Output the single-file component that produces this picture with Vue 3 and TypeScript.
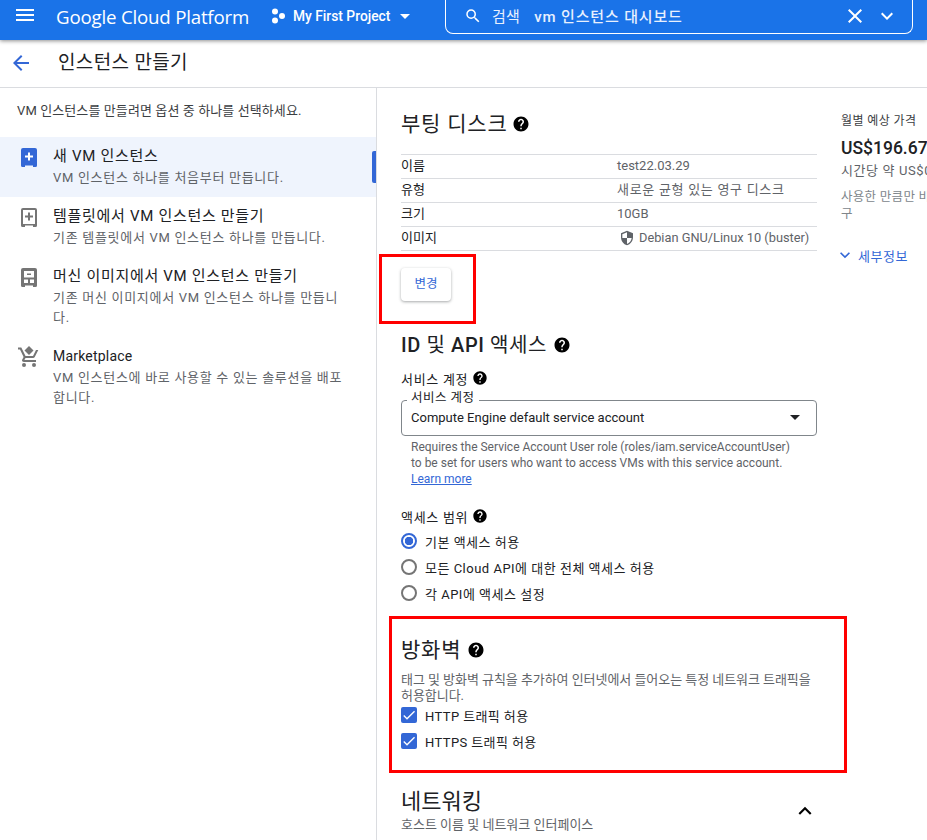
<script setup lang="ts">
interface Option { title: string; desc: string; icon: string; active?: boolean }
const options: Option[] = [
  { title: '새 VM 인스턴스', desc: 'VM 인스턴스 하나를 처음부터 만듭니다.', icon: 'new', active: true },
  { title: '템플릿에서 VM 인스턴스 만들기', desc: '기존 템플릿에서 VM 인스턴스 하나를 만듭니다.', icon: 'template' },
  { title: '머신 이미지에서 VM 인스턴스 만들기', desc: '기존 머신 이미지에서 VM 인스턴스 하나를 만듭니다.', icon: 'image' },
  { title: 'Marketplace', desc: 'VM 인스턴스에 바로 사용할 수 있는 솔루션을 배포합니다.', icon: 'cart' },
]
const disk = [
  { k: '이름', v: 'test22.03.29', ko: false },
  { k: '유형', v: '새로운 균형 있는 영구 디스크', ko: true },
  { k: '크기', v: '10GB', ko: false },
]
const scopes = [
  { label: '기본 액세스 허용', on: true },
  { label: '모든 Cloud API에 대한 전체 액세스 허용', on: false },
  { label: '각 API에 액세스 설정', on: false },
]
const foot = 'M2 0h12a2 2 0 0 1 2 2v15.500a1.500 1.500 0 0 1-1.500 1.500H12v-1.500H4V19H1.500A1.500 1.500 0 0 1 0 17.500V2a2 2 0 0 1 2-2z'
const plus = 'M7 4.500h2v3h3v2H9v3H7v-3H4v-2h3z'
const help = 'M12 2C6.48 2 2 6.48 2 12s4.48 10 10 10 10-4.48 10-10S17.52 2 12 2zm1 17h-2v-2h2v2zm2.07-7.75l-.9.92C13.45 12.9 13 13.5 13 15h-2v-.5c0-1.1.45-2.1 1.17-2.83l1.24-1.26c.37-.36.59-.86.59-1.41 0-1.1-.9-2-2-2s-2 .9-2 2H8c0-2.21 1.79-4 4-4s4 1.79 4 4c0 .88-.36 1.68-.93 2.25z'
</script>

<template>
  <div class="page">
    <header class="topbar">
      <svg class="menu" width="24" height="24" viewBox="0 0 24 24"><path fill="#fff" d="M3 18h18v-2H3v2zm0-5h18v-2H3v2zm0-7v2h18V6H3z" /></svg>
      <span class="brand">Google Cloud Platform</span>
      <svg class="hex" width="16" height="16" viewBox="0 0 16 16"><circle cx="4" cy="3.500" r="3" fill="#fff" /><circle cx="4" cy="12.500" r="3" fill="#fff" /><circle cx="11" cy="8" r="3" fill="#fff" /></svg>
      <span class="project">My First Project</span>
      <svg class="caret" width="24" height="24" viewBox="0 0 24 24"><path fill="#fff" d="M7 10l5 5 5-5z" /></svg>
      <div class="search">
        <svg width="18" height="18" viewBox="0 0 24 24"><path fill="#fff" d="M15.5 14h-.79l-.28-.27A6.47 6.47 0 0 0 16 9.5 6.5 6.5 0 1 0 9.5 16c1.61 0 3.09-.59 4.23-1.57l.27.28v.79l5 4.99L20.49 19l-4.99-5zm-6 0C7.01 14 5 11.99 5 9.5S7.01 5 9.5 5 14 7.01 14 9.5 11.99 14 9.5 14z" /></svg>
        <span class="s-label">검색</span>
        <span class="s-query">vm 인스턴스 대시보드</span>
        <svg class="s-x" width="24" height="24" viewBox="0 0 24 24"><path fill="#fff" d="M19 6.41L17.59 5 12 10.59 6.41 5 5 6.41 10.59 12 5 17.59 6.41 19 12 13.41 17.59 19 19 17.59 13.41 12z" /></svg>
        <svg class="s-down" width="24" height="24" viewBox="0 0 24 24"><path fill="#fff" d="M7.41 8.59L12 13.17l4.59-4.58L18 10l-6 6-6-6z" /></svg>
      </div>
    </header>

    <div class="subbar">
      <svg width="24" height="24" viewBox="0 0 24 24"><path fill="#3367d6" d="M20 11H7.83l5.59-5.59L12 4l-8 8 8 8 1.41-1.41L7.83 13H20z" /></svg>
      <h1>인스턴스 만들기</h1>
    </div>

    <div class="body">
      <aside class="left">
        <p class="intro">VM 인스턴스를 만들려면 옵션 중 하나를 선택하세요.</p>
        <div v-for="o in options" :key="o.title" class="opt" :class="{ active: o.active }">
          <div class="icon-box">
            <svg v-if="o.icon === 'new'" width="16" height="19" viewBox="0 0 16 19"><path fill="#3367d6" :d="foot" /><path fill="#fff" :d="plus" /></svg>
            <svg v-else-if="o.icon === 'template'" width="16" height="19" viewBox="0 0 16 19"><path fill="#757575" fill-rule="evenodd" :d="foot + 'M2 2v14h12V2z'" /><path fill="#757575" :d="plus" /></svg>
            <svg v-else-if="o.icon === 'image'" width="16" height="19" viewBox="0 0 16 19"><path fill="#757575" fill-rule="evenodd" :d="foot + 'M3 3v6.500h10V3zM3 11.500V15h4v-3.500zM9 11.500V15h4v-3.500z'" /><path fill="#757575" d="M6 5.500h4V7H6z" /></svg>
            <svg v-else class="cart" width="24" height="24" viewBox="0 0 24 24"><path fill="#757575" d="M7 18a2 2 0 1 0 0 4 2 2 0 0 0 0-4zm10 0a2 2 0 1 0 0 4 2 2 0 0 0 0-4zM1 2.500v2h2l3.600 7.600-1.350 2.400C4.500 15.900 5.500 17 7 17h12v-2H7.400l1.100-2h7.500c.75 0 1.400-.4 1.750-1L21.300 5H19l-3 6H8.500L4.300 2.500z" /><path fill="#757575" d="M12 1l4.500 4.500L12 10 7.500 5.500z" /></svg>
          </div>
          <div class="opt-text">
            <div class="opt-title" :class="{ latin: o.icon === 'cart' }">{{ o.title }}</div>
            <div class="opt-desc">{{ o.desc }}</div>
          </div>
        </div>
      </aside>

      <main class="center">
        <div class="sec-head first">
          <h2>부팅 디스크</h2>
          <svg class="help" width="18" height="18" viewBox="0 0 24 24"><path :d="help" /></svg>
        </div>
        <div class="table">
          <div v-for="r in disk" :key="r.k" class="row">
            <span class="k">{{ r.k }}</span><span class="v" :class="{ ko: r.ko }">{{ r.v }}</span>
          </div>
          <div class="row">
            <span class="k">이미지</span>
            <span class="v os">
              <svg width="16" height="16" viewBox="0 0 24 24"><path fill="#5f6368" d="M12 1L3 5v6c0 5.550 3.840 10.740 9 12 5.160-1.260 9-6.450 9-12V5l-9-4zm0 10.990h7c-.53 4.120-3.280 7.790-7 8.940V12H5V6.300l7-3.110v8.800z" /></svg>
              Debian GNU/Linux 10 (buster)
            </span>
          </div>
        </div>
        <button class="change" type="button">변경</button>

        <div class="sec-head id">
          <h2 class="mid"><b>ID</b> 및 <b>API</b> 액세스</h2>
          <svg class="help" width="18" height="18" viewBox="0 0 24 24"><path :d="help" /></svg>
        </div>
        <div class="label l1">서비스 계정
          <svg class="help" width="16" height="16" viewBox="0 0 24 24"><path :d="help" /></svg>
        </div>
        <div class="select">
          <span class="legend">서비스 계정</span>
          <span>Compute Engine default service account</span>
          <svg width="24" height="24" viewBox="0 0 24 24"><path fill="#202124" d="M7 10l5 5 5-5z" /></svg>
        </div>
        <p class="hint">Requires the Service Account User role (roles/iam.serviceAccountUser) to be set for users who want to access VMs with this service account. <a>Learn more</a></p>

        <div class="label l2">액세스 범위
          <svg class="help" width="16" height="16" viewBox="0 0 24 24"><path :d="help" /></svg>
        </div>
        <div class="radios">
          <div v-for="s in scopes" :key="s.label" class="radio-row">
            <span class="radio" :class="{ on: s.on }"></span>
            <span>{{ s.label }}</span>
          </div>
        </div>

        <div class="sec-head fw">
          <h2>방화벽</h2>
          <svg class="help" width="18" height="18" viewBox="0 0 24 24"><path :d="help" /></svg>
        </div>
        <p class="fw-desc">태그 및 방화벽 규칙을 추가하여 인터넷에서 들어오는 특정 네트워크 트래픽을 허용합니다.</p>
        <div v-for="c in ['HTTP 트래픽 허용', 'HTTPS 트래픽 허용']" :key="c" class="check-row">
          <span class="check"><svg width="16" height="16" viewBox="0 0 24 24"><path fill="#fff" d="M9 16.200L4.800 12l-1.400 1.400L9 19 21 7l-1.400-1.400z" /></svg></span>
          <span>{{ c }}</span>
        </div>

        <div class="net">
          <div>
            <h2 class="net-title">네트워킹</h2>
            <div class="net-sub">호스트 이름 및 네트워크 인터페이스</div>
          </div>
          <svg width="26" height="26" viewBox="0 0 24 24"><path fill="#000" d="M12 8l-6 6 1.410 1.410L12 10.830l4.590 4.580L18 14z" /></svg>
        </div>
      </main>

      <section class="price">
        <div class="p-title">월별 예상 가격</div>
        <div class="p-big">US$196.67</div>
        <div class="p-hour">시간당 약 US$0.27</div>
        <div class="p-note">사용한 만큼만 비<br />구</div>
        <div class="p-more">
          <svg width="20" height="20" viewBox="0 0 24 24"><path fill="#3367d6" d="M7.410 8.590L12 13.170l4.590-4.580L18 10l-6 6-6-6z" /></svg>
          세부정보
        </div>
      </section>
    </div>

    <div class="mark mark-a"></div>
    <div class="mark mark-b"></div>
  </div>
</template>

<style>
html, body { margin: 0; background: #fff; overflow: hidden; }
</style>

<style scoped>
* { box-sizing: border-box; }
.page {
  position: relative;
  width: 927px;
  height: 840px;
  overflow: hidden;
  font-family: Roboto, "Noto Sans CJK KR", sans-serif;
  color: #202124;
  font-size: 13px;
}
.topbar {
  position: relative;
  z-index: 2;
  height: 40px;
  background: #1a73e8;
  box-shadow: 0 1px 4px rgba(0, 0, 0, .45);
  display: flex;
  align-items: center;
  padding: 0 0 8px 13px;
  color: #fff;
}
.menu { margin-top: -2px; }
.brand { margin-left: 19px; font-size: 18.700px; white-space: nowrap; width: 215px; font-family: "Open Sans", Roboto, sans-serif; letter-spacing: -.2px; }
.hex { margin-right: 6px; }
.project { font-size: 13.800px; font-weight: 500; width: 98px; white-space: nowrap; }
.caret { margin-left: 2px; }
.search {
  align-self: flex-start;
  margin-left: 28px;
  margin-top: -10px;
  width: 468px;
  height: 44px;
  padding-top: 8px;
  border: 1px solid #fff;
  border-top: 0;
  border-radius: 0 0 8px 8px;
  display: flex;
  align-items: center;
  padding-left: 18px;
}
.s-label { margin-left: 10px; font-size: 15px; letter-spacing: .3px; color: #e8f0fe; }
.s-query { margin-left: 14px; font-size: 15px; font-weight: 500; letter-spacing: .85px; color: #e8f0fe; }
.s-x { margin-left: auto; }
.s-down { margin: 0 13px 0 8px; }
.subbar {
  height: 48px;
  border-bottom: 1px solid #dadce0;
  display: flex;
  align-items: center;
  padding: 0 0 1px 9px;
}
h1 { margin: 0 0 0 25px; font-size: 19px; font-weight: 400; letter-spacing: .35px; line-height: 28px; }
.body { display: flex; height: 752px; }
.left { width: 377px; flex: none; border-right: 1px solid #dadce0; }
.intro { margin: 14px 0 17px 17px; font-size: 13px; line-height: 18px; color: #3c4043; letter-spacing: .1px; }
.opt { position: relative; display: flex; padding: 8px 31px 9px 17px; min-height: 60px; }
.opt.active { background: #eff4fd; }
.opt.active::after {
  content: '';
  position: absolute;
  right: 0;
  top: 14px;
  width: 4px;
  height: 32px;
  border-radius: 2px 0 0 2px;
  background: #3367d6;
}
.icon-box { flex: none; width: 24px; padding-top: 3px; display: flex; justify-content: center; }
.cart { margin-top: -3px; }
.opt-text { margin-left: 12px; }
.opt-title { font-size: 15px; line-height: 22px; letter-spacing: .7px; }
.opt-title.latin { font-size: 14px; letter-spacing: .2px; }
.opt-desc { margin-top: 1px; font-size: 13px; line-height: 20px; letter-spacing: .7px; color: #5f6368; }
.center { width: 464px; flex: none; padding: 0 24px; }
.sec-head { display: flex; align-items: center; gap: 8px; }
.sec-head.first { margin-top: 20px; height: 32px; }
.sec-head.first .help { margin-left: -4px; }
h2 { margin: 0; font-size: 21px; font-weight: 400; letter-spacing: .8px; line-height: 28px; }
h2 + .help { margin-left: -2px; }
h2.mid { font-size: 20px; letter-spacing: .6px; }
h2 b { font-weight: 500; }
.table { margin-top: 14px; width: 416px; border-top: 1px solid #dadce0; }
.row { height: 24px; border-bottom: 1px solid #dadce0; display: flex; align-items: center; padding-bottom: 1px; }
.k { width: 216px; font-size: 13px; line-height: 20px; }
.v { font-size: 13px; line-height: 20px; color: #5f6368; }
.v.ko { letter-spacing: .7px; }
.os { display: flex; align-items: center; gap: 4px; margin-left: 2px; font-size: 12.800px; white-space: nowrap; }
.change {
  display: block;
  margin-top: 17px;
  width: 50px;
  height: 33px;
  padding: 0 0 4px;
  border: 0;
  border-radius: 4px;
  background: #fff;
  color: #3367d6;
  font: 12.500px Roboto, "Noto Sans CJK KR", sans-serif;
  box-shadow: 0 1px 3px rgba(60, 64, 67, .45);
}
.sec-head.id { margin-top: 30px; height: 28px; }
.label { display: flex; align-items: center; gap: 4px; font-size: 13px; letter-spacing: .7px; }
.l1 { margin-top: 9px; height: 20px; }
.l2 { margin-top: 19px; height: 20px; }
.select {
  position: relative;
  margin-top: 12px;
  width: 416px;
  height: 36px;
  border: 1px solid #80868b;
  border-radius: 4px;
  display: flex;
  align-items: center;
  justify-content: space-between;
  padding: 0 9px 2px;
  font-size: 13px;
}
.legend {
  position: absolute;
  left: 5px;
  top: -12px;
  padding: 0 4px;
  background: #fff;
  font-size: 12.500px;
  line-height: 18px;
  letter-spacing: .5px;
}
.hint { margin: 3px 0 0 10px; width: 385px; font-size: 12px; line-height: 16px; color: #5f6368; }
.hint a { color: #3367d6; text-decoration: underline; }
.radios { margin-top: 2px; }
.radio-row { display: flex; align-items: center; gap: 8px; height: 26px; font-size: 13px; letter-spacing: .5px; }
.radio { width: 16px; height: 16px; border: 2px solid #757575; border-radius: 50%; flex: none; }
.radio.on { border-color: #3367d6; background: radial-gradient(circle, #3367d6 0 4px, #fff 4.500px); }
.sec-head.fw { margin-top: 31px; height: 26px; }
.fw-desc { margin: 9px 0 -2px; width: 416px; font-size: 13px; line-height: 16px; letter-spacing: -.05px; color: #5f6368; }
.check-row { display: flex; align-items: center; gap: 8px; height: 26px; font-size: 13px; letter-spacing: .4px; }
.check { width: 16px; height: 16px; border-radius: 2px; background: #3367d6; display: flex; flex: none; }
.net { margin-top: 34px; width: 417px; display: flex; align-items: center; justify-content: space-between; }
.net-title { font-size: 22px; line-height: 28px; letter-spacing: 0; }
.net-sub { font-size: 13px; line-height: 18px; letter-spacing: 0; color: #5f6368; }
.price { flex: 1; min-width: 0; padding: 24px 0 0 0; white-space: nowrap; }
.p-title { font-size: 12px; line-height: 18px; letter-spacing: .4px; color: #3c4043; }
.p-big { margin-top: 7px; font-size: 17.500px; line-height: 22px; font-weight: 500; }
.p-hour { margin-top: 3px; font-size: 13px; line-height: 18px; letter-spacing: .6px; color: #5f6368; }
.p-note { margin-top: 8px; font-size: 12.500px; line-height: 17px; letter-spacing: .3px; color: #80868b; height: 34px; }
.p-more { display: flex; align-items: center; gap: 3px; margin: 23px 0 0 -6px; color: #3367d6; font-size: 13px; letter-spacing: .5px; }
.mark { position: absolute; border: 3px solid #f00; pointer-events: none; }
.mark-a { left: 379px; top: 254px; width: 97px; height: 70px; }
.mark-b { left: 389px; top: 616px; width: 458px; height: 157px; }
</style>
